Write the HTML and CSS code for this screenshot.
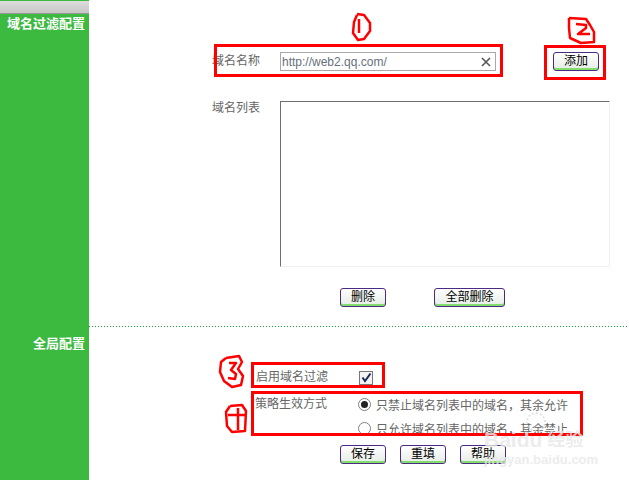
FILE: index.html
```html
<!DOCTYPE html>
<html lang="zh-CN">
  <head>
    <meta charset="UTF-8" />
    <title>域名过滤配置</title>
    <link rel="stylesheet" href="styles.css">
  </head>
  <body>
    <div class="page">
      <div class="cap"></div>

      <section class="block block-domain">
        <h2 class="block-title">域名过滤配置</h2>
        <div class="block-body">
          <div class="row row-name">
            <label class="field-label">域名名称</label>
            <div class="text-input">
              <span>http://web2.qq.com/</span>
              <svg class="clear" width="10" height="10" viewBox="0 0 10 10"><path d="M1 1 L9 9 M9 1 L1 9" stroke="#555" stroke-width="1.6"/></svg>
            </div>
            <button class="btn btn-add">添加</button>
          </div>
          <div class="row row-list">
            <label class="field-label">域名列表</label>
            <div class="list-box"></div>
          </div>
          <div class="row-actions">
            <button class="btn">删除</button>
            <button class="btn btn-wide">全部删除</button>
          </div>
        </div>
      </section>

      <section class="block block-global">
        <h2 class="block-title">全局配置</h2>
        <div class="block-body">
          <div class="row row-enable">
            <label class="option-label">启用域名过滤</label>
            <span class="check"><svg width="11" height="11" viewBox="0 0 11 11"><path d="M1.5 5.5 L4 9 L9.5 1.5" fill="none" stroke="#1c2a5a" stroke-width="2"/></svg></span>
          </div>
          <div class="row row-mode">
            <label class="option-label">策略生效方式</label>
            <div class="radios">
              <div class="radio-line"><span class="radio radio-on"></span>只禁止域名列表中的域名，其余允许</div>
              <div class="radio-line"><span class="radio"></span>只允许域名列表中的域名，其余禁止</div>
            </div>
          </div>
          <div class="row-save">
            <button class="btn">保存</button>
            <button class="btn">重填</button>
            <button class="btn">帮助</button>
          </div>
        </div>
      </section>

      <!-- red marks drawn on top of the screenshot -->
      <div class="mark mark-1"></div>
      <div class="mark mark-2"></div>
      <div class="mark mark-3"></div>
      <div class="mark mark-4"></div>
      <svg class="scribble" width="629" height="480" viewBox="0 0 629 480">
        <g fill="none" stroke="#f00" stroke-width="2.5" stroke-linejoin="round">
          <path d="M357 15 L354 22 L353 33 L358 40 L364 39 L370 31 L370 23 L364 15 L357 14"/>
          <path d="M359 19 L359 33" />
          <path d="M569 18 L586 19 L590 25 L594 32 L594 42 L581 43 L570 38 L569 28 L569 18"/>
          <path d="M576 24 L586 25 L586 28 L578 34 L590 34"/>
          <path d="M226 358 L239 356 L242 362 L238 369 L243 376 L241 385 L232 387 L224 381 L220 372 L221 362 L226 358"/>
          <path d="M229 363 L236 363 L231 370 L236 374 L235 379 L228 378"/>
          <path d="M230 406 L242 405 L246 411 L245 431 L232 432 L227 426 L226 412 L230 406"/>
          <path d="M228 415 L245 415 M238 408 L238 430"/>
        </g>
      </svg>

      <div class="watermark">
        <div class="wm-logo">Baidu<span class="wm-cn">经验</span></div>
        <div class="wm-url">jingyan.baidu.com</div>
        <span class="wm-paw"></span>
      </div>
    </div>
  </body>
</html>
```

FILE: styles.css
```css
html,
body {
  margin: 0;
  padding: 0;
  background: #fff;
}
.page {
  position: relative;
  width: 629px;
  height: 480px;
  overflow: hidden;
  font-family: "Liberation Sans", "Noto Sans CJK SC", sans-serif;
  font-size: 12px;
  color: #666;
  background: linear-gradient(to right, #3cb93f 89px, #fff 89px);
}
.cap {
  width: 89px;
  height: 13px;
  margin-top: 1px;
  box-sizing: border-box;
  background: linear-gradient(to bottom, #dcdcdc, #c6c6c6);
  border-bottom: 1px solid #999;
}
.block {
  display: flex;
}
.block-title {
  flex: none;
  width: 85px;
  margin: 0;
  padding-right: 4px;
  font-size: 13px;
  line-height: 18px;
  font-weight: bold;
  color: #fff;
  text-align: right;
}
.block-domain .block-title {
  margin-top: 1px;
}
.block-global .block-title {
  margin-top: 8px;
}
.block-body {
  flex: 1;
}
.block-domain .block-body {
  height: 313px;
  background: linear-gradient(to right, #14a83c 1px, transparent 1px) left bottom / 3px 1px repeat-x;
}
.row {
  display: flex;
}
.row-name {
  margin-top: 38px;
  padding-left: 123px;
  align-items: center;
  height: 19px;
}
.field-label {
  width: 68px;
  flex: none;
  line-height: 17px;
}
.text-input {
  display: flex;
  justify-content: space-between;
  align-items: center;
  box-sizing: border-box;
  width: 216px;
  height: 19px;
  padding: 0 1px;
  border: 1px solid #a9a9a9;
  color: #68707c;
}
.clear {
  margin-right: 3px;
}
.btn {
  box-sizing: border-box;
  width: 46px;
  height: 19px;
  padding: 0;
  font-family: inherit;
  font-size: 12px;
  line-height: 15px;
  color: #000;
  background: linear-gradient(to bottom, #fff, #e8efe8 85%);
  border: 1px solid #4b2a82;
  border-radius: 3px;
  box-shadow: inset 0 -2px 0 #82dc6e;
}
.btn-add {
  margin-left: 57px;
}
.btn-wide {
  width: 71px;
  margin-left: 48px;
}
.row-list {
  margin-top: 30px;
  padding-left: 123px;
}
.row-list .field-label {
  margin-top: -1px;
}
.list-box {
  box-sizing: border-box;
  width: 330px;
  height: 166px;
  border: 1px solid #f1f1f1;
  border-top-color: #6e6e6e;
  border-left-color: #6e6e6e;
}
.row-actions {
  display: flex;
  margin-top: 21px;
  padding-left: 251px;
}
.row-enable {
  margin-top: 43px;
  padding-left: 167px;
  align-items: center;
  height: 15px;
}
.option-label {
  flex: none;
  width: 103px;
  line-height: 17px;
}
.check {
  display: flex;
  align-items: center;
  justify-content: center;
  box-sizing: border-box;
  width: 14px;
  height: 14px;
  border: 1px solid #777;
  background: #f4f4f4;
}
.row-mode {
  margin-top: 10px;
  padding-left: 166px;
}
.row-mode .option-label {
  margin-top: 1px;
}
.radios {
  display: flex;
  flex-direction: column;
  gap: 6px;
}
.radio-line {
  display: flex;
  align-items: center;
  height: 18px;
  white-space: nowrap;
}
.radio {
  flex: none;
  position: relative;
  box-sizing: border-box;
  width: 13px;
  height: 13px;
  margin-right: 5px;
  border: 1px solid #808080;
  border-radius: 50%;
  background: #fff;
}
.radio-on::after {
  content: "";
  position: absolute;
  left: 2px;
  top: 2px;
  width: 7px;
  height: 7px;
  border-radius: 50%;
  background: #222;
}
.row-save {
  display: flex;
  gap: 14px;
  margin-top: 8px;
  padding-left: 251px;
}
.mark {
  position: absolute;
  box-sizing: border-box;
  border: 3px solid #f00;
}
.mark-1 {
  left: 214px;
  top: 44px;
  width: 289px;
  height: 33px;
}
.mark-2 {
  left: 544px;
  top: 45px;
  width: 62px;
  height: 35px;
}
.mark-3 {
  left: 251px;
  top: 362px;
  width: 134px;
  height: 26px;
}
.mark-4 {
  left: 251px;
  top: 391px;
  width: 332px;
  height: 45px;
}
.scribble {
  position: absolute;
  left: 0;
  top: 0;
}
.watermark {
  position: absolute;
  left: 484px;
  top: 430px;
  width: 110px;
  color: rgba(232, 232, 232, 0.82);
  font-weight: bold;
}
.wm-logo {
  display: flex;
  align-items: center;
  font-size: 21px;
  line-height: 20px;
  white-space: nowrap;
}
.wm-cn {
  margin-left: 5px;
  font-size: 18px;
}
.wm-url {
  margin-top: 3px;
  font-size: 13px;
  line-height: 14px;
  white-space: nowrap;
}
.wm-paw {
  position: absolute;
  left: 42px;
  top: -18px;
  width: 16px;
  height: 16px;
  border-radius: 50%;
  border: 2px dotted rgba(205, 205, 205, 0.6);
}
```
